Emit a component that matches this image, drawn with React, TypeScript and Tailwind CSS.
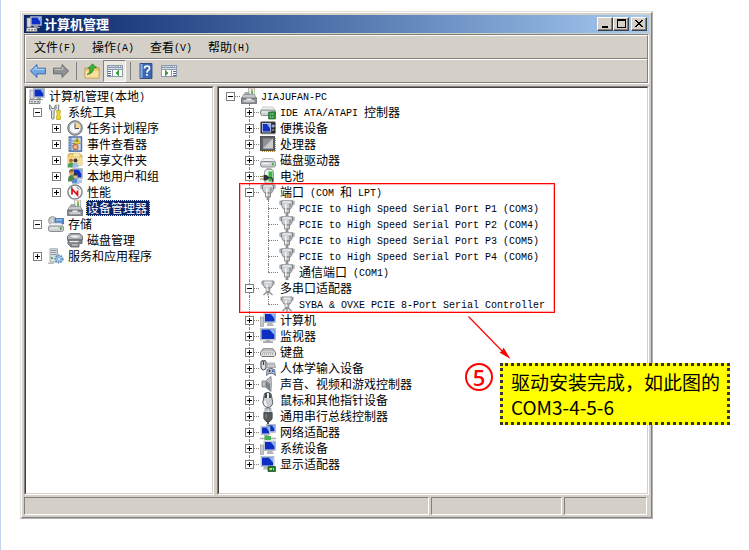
import React from 'react';

type IconName =
  | 'computer' | 'tools' | 'clock' | 'events' | 'shared' | 'users' | 'perf' | 'device'
  | 'storage' | 'disk' | 'services' | 'ide' | 'portable' | 'cpu' | 'drive' | 'battery'
  | 'port' | 'multiport' | 'pc' | 'monitor' | 'keyboard' | 'hid' | 'sound' | 'mouse'
  | 'usb' | 'network' | 'display';

type TreeItem = {
  label: string;
  icon: IconName;
  open?: boolean;
  selected?: boolean;
  children?: TreeItem[];
};

const consoleTree: TreeItem = {
  label: '计算机管理(本地)',
  icon: 'computer',
  open: true,
  children: [
    {
      label: '系统工具',
      icon: 'tools',
      open: true,
      children: [
        { label: '任务计划程序', icon: 'clock', open: false },
        { label: '事件查看器', icon: 'events', open: false },
        { label: '共享文件夹', icon: 'shared', open: false },
        { label: '本地用户和组', icon: 'users', open: false },
        { label: '性能', icon: 'perf', open: false },
        { label: '设备管理器', icon: 'device', selected: true },
      ],
    },
    { label: '存储', icon: 'storage', open: true, children: [{ label: '磁盘管理', icon: 'disk' }] },
    { label: '服务和应用程序', icon: 'services', open: false },
  ],
};

const deviceTree: TreeItem = {
  label: 'JIAJUFAN-PC',
  icon: 'device',
  open: true,
  children: [
    { label: 'IDE ATA/ATAPI 控制器', icon: 'ide', open: false },
    { label: '便携设备', icon: 'portable', open: false },
    { label: '处理器', icon: 'cpu', open: false },
    { label: '磁盘驱动器', icon: 'drive', open: false },
    { label: '电池', icon: 'battery', open: false },
    {
      label: '端口 (COM 和 LPT)',
      icon: 'port',
      open: true,
      children: [
        { label: 'PCIE to High Speed Serial Port P1 (COM3)', icon: 'port' },
        { label: 'PCIE to High Speed Serial Port P2 (COM4)', icon: 'port' },
        { label: 'PCIE to High Speed Serial Port P3 (COM5)', icon: 'port' },
        { label: 'PCIE to High Speed Serial Port P4 (COM6)', icon: 'port' },
        { label: '通信端口 (COM1)', icon: 'port' },
      ],
    },
    {
      label: '多串口适配器',
      icon: 'multiport',
      open: true,
      children: [{ label: 'SYBA & OVXE PCIE 8-Port Serial Controller', icon: 'multiport' }],
    },
    { label: '计算机', icon: 'pc', open: false },
    { label: '监视器', icon: 'monitor', open: false },
    { label: '键盘', icon: 'keyboard', open: false },
    { label: '人体学输入设备', icon: 'hid', open: false },
    { label: '声音、视频和游戏控制器', icon: 'sound', open: false },
    { label: '鼠标和其他指针设备', icon: 'mouse', open: false },
    { label: '通用串行总线控制器', icon: 'usb', open: false },
    { label: '网络适配器', icon: 'network', open: false },
    { label: '系统设备', icon: 'pc', open: false },
    { label: '显示适配器', icon: 'display', open: false },
  ],
};

const menus = ['文件(F)', '操作(A)', '查看(V)', '帮助(H)'];

// Screen with a blue picture, drawn in a box of w x h
function Screen({ x, y, w, h }: { x: number; y: number; w: number; h: number }) {
  return (
    <g>
      <rect x={x} y={y} width={w} height={h} fill="#d3d9df" stroke="#9aa2aa" strokeWidth=".6" />
      <rect x={x + 1} y={y + 1} width={w - 2} height={h - 2} fill="#0b2fc4" />
      <path d={`M${x + w * 0.6} ${y + 1}h${w * 0.4 - 1}v${h / 2}z`} fill="#8db8f4" />
    </g>
  );
}

function DriveBody({ y }: { y: number }) {
  return (
    <g>
      <path d={`M3 ${y}h10l2.5 3.5H.5z`} fill="#f1f2f3" stroke="#b1b5b9" strokeWidth=".7" />
      <rect x=".5" y={y + 3} width="15" height="5.5" rx="2" fill="#cdd0d3" stroke="#7d8185" strokeWidth=".9" />
      <path d={`M2 ${y + 5}h8`} stroke="#f4f5f6" />
      <rect x="12" y={y + 4.3} width="1.6" height="2.6" fill="#3fa84b" />
    </g>
  );
}

const art: Record<IconName, React.ReactNode> = {
  computer: (
    <g>
      <rect x="1" y="2" width="4" height="9" fill="#d8dbe0" stroke="#8a8f96" strokeWidth=".7" />
      <Screen x={4.5} y={0.5} w={11} h={9} />
      <path d="M8 9.5h4v1.500h2v1H7z" fill="#9aa1a9" />
      <path d="M1 11.500h10V15.500H0z" fill="#e5e5e2" stroke="#6e7175" strokeWidth=".8" />
      <path d="M2 13.800h2m1 0h2m1 0h2" stroke="#595d61" />
    </g>
  ),
  tools: (
    <g>
      <path d="M1.500.8v4.500l2 1.600v7.500q1.300 1.600 2.600 0V6.900l2-1.600V.8L6.500 2.500v2H3.300v-2z" fill="#dfe2e4" stroke="#6b7074" strokeWidth=".9" />
      <path d="M10.500.5V7" stroke="#8b8f93" strokeWidth="1.500" />
      <path d="M8.700 6.500h3.600v2.300l-.8 1.200.9 1.500v4H8.600v-4l.9-1.500-.8-1.200z" fill="#f0d91a" stroke="#a8920c" strokeWidth=".6" />
    </g>
  ),
  clock: (
    <g>
      <circle cx="8" cy="8" r="7.300" fill="#a5aaaf" stroke="#63686d" strokeWidth=".9" />
      <circle cx="8" cy="8" r="5.700" fill="#f4f6fa" stroke="#8d9297" strokeWidth=".5" />
      <path d="M8 8V2.300A5.700 5.700 0 0 1 13.700 8z" fill="#f5d797" />
      <path d="M8 3.500V8.500h4" fill="none" stroke="#454a50" strokeWidth="1" />
    </g>
  ),
  events: (
    <g>
      <rect x="2" y=".8" width="12.800" height="14.500" fill="#5f88c8" stroke="#38578c" strokeWidth=".8" />
      <rect x="4.500" y="1.800" width="9.200" height="12.400" fill="#c6dbf3" />
      <path d="M5 5h4M5 7.500h3M5 10h2" stroke="#5079b3" strokeWidth=".8" />
      <path d="M.8 3h2.700M.8 5.500h2.700M.8 8h2.700M.8 10.500h2.700M.8 13h2.700" stroke="#c3c8ce" strokeWidth="1.100" />
      <path d="M10 1.500l3.300 6H6.700z" fill="#ffe13a" stroke="#b58800" strokeWidth=".6" />
      <path d="M10 3.500v2.600" stroke="#222" />
      <rect x="6" y="8.500" width="5" height="5" rx="1" fill="#e58944" stroke="#a34c19" strokeWidth=".6" />
      <path d="M7.300 9.800l2.400 2.400m0-2.400l-2.400 2.400" stroke="#fff" strokeWidth=".8" />
    </g>
  ),
  shared: (
    <g>
      <path d="M1 3l1-1.500h4L7 3h8v10H1z" fill="#efcf78" stroke="#bd9238" strokeWidth=".7" />
      <path d="M6 1h7v4H6z" fill="#f9e9b4" stroke="#c9a65b" strokeWidth=".5" />
      <path d="M1 5.500h14V13H1z" fill="#f7df9a" />
      <circle cx="4" cy="8.500" r="2" fill="#b66f35" />
      <circle cx="8.500" cy="8.500" r="2" fill="#3d3a36" />
      <path d="M.5 15q0-4.500 3.500-4.500t3.500 4.500v.5h-7z" fill="#4aa05a" />
      <path d="M5.500 15.500V13q1-2.500 3-2.500t3 3v2z" fill="#9bc0e4" />
    </g>
  ),
  users: (
    <g>
      <Screen x={6} y={0.5} w={9.5} h={10} />
      <circle cx="4.500" cy="4.500" r="2.500" fill="#d9a058" />
      <path d="M2 4q0-3 3-3 2.500 0 2.300 2.500z" fill="#8a6530" />
      <path d="M1 12q0-5 3.500-5T8 12v1.500H1z" fill="#4a8752" />
      <circle cx="8.500" cy="8" r="2.300" fill="#e2bb8d" />
      <path d="M6.200 7.500q0-2.600 2.600-2.500 2.200.2 2 2.500z" fill="#393128" />
      <path d="M5 15.500q0-5 3.500-5t4 5z" fill="#5b8acb" />
      <path d="M10 11.500h5V15h-5z" fill="#a9c8e8" />
    </g>
  ),
  perf: (
    <g>
      <circle cx="8" cy="8" r="7.100" fill="#fafafa" stroke="#85898d" strokeWidth="1.500" />
      <path d="M5 10.500V5l5.500 6V6.500" fill="none" stroke="#e0131a" strokeWidth="1.800" />
      <path d="M3.500 5l2-1.700M9.500 3.200l2.800 2.200" stroke="#5e6266" strokeWidth=".9" />
    </g>
  ),
  device: (
    <g>
      <path d="M7.500 0H13.500v8h-6z" fill="#eef0ec" stroke="#a2a6a1" strokeWidth=".7" />
      <path d="M11 1v2" stroke="#d9a51d" strokeWidth="1.600" />
      <path d="M11 3v3" stroke="#49a84a" strokeWidth="1.600" />
      <path d="M4 4.500h4l1 3.500H3z" fill="#a9adaf" stroke="#85898c" strokeWidth=".6" />
      <path d="M2.500 6.500h11l2 4H.5z" fill="#c3c7c9" stroke="#85898c" strokeWidth=".7" />
      <path d="M.3 10h15.400v5.500H.3z" fill="#858a8c" stroke="#5c6063" strokeWidth=".7" />
      <path d="M2.500 12h11v2.200h-11z" fill="#c9cdcf" />
      <path d="M5.500 10.500h5v1.500h-5z" fill="#eef0f1" />
    </g>
  ),
  storage: (
    <g>
      <circle cx="4.500" cy="4.500" r="4" fill="#c5cacf" stroke="#7c8186" strokeWidth=".7" />
      <circle cx="4.500" cy="4.500" r="1.200" fill="#fff" stroke="#888" strokeWidth=".4" />
      <path d="M7 2.500h8.500V8H7z" fill="#4d88d2" stroke="#356197" strokeWidth=".7" />
      <path d="M8 3.500h6v1H8z" fill="#c5def7" />
      <DriveBody y={7} />
    </g>
  ),
  disk: (
    <g>
      <path d="M3 1.500h10l2.500 3V8H.5V4.500z" fill="#afb3b6" stroke="#64686b" strokeWidth=".9" />
      <ellipse cx="8" cy="4.500" rx="5" ry="1.800" fill="#edeff0" stroke="#808487" strokeWidth=".6" />
      <path d="M1 8h14v3.500h-3V15H4l-3-3z" fill="#85898c" stroke="#565a5d" strokeWidth=".8" />
      <path d="M2.500 9.500h9" stroke="#e9ebec" strokeWidth="1.200" />
      <path d="M5 13h6" stroke="#d3d6d8" />
    </g>
  ),
  services: (
    <g>
      <path d="M2 .8h7.500V14H2z" fill="#dcdfe2" stroke="#92979b" strokeWidth=".8" />
      <path d="M3 2.500h5.500M3 4.500h5.500M3 6.500h5.500" stroke="#7e8387" strokeWidth=".8" />
      <rect x="3" y="9" width="2" height="2" fill="#49b64e" />
      <circle cx="11" cy="11" r="3.600" fill="#b3cee9" stroke="#5a8fc4" strokeWidth="2" strokeDasharray="1.600 1" />
      <circle cx="11" cy="11" r="1.500" fill="#fff" stroke="#5a8fc4" strokeWidth=".7" />
      <path d="M0 14.500h6V16H0z" fill="#b5babd" />
    </g>
  ),
  ide: (
    <g>
      <DriveBody y={3} />
      <path d="M8.500 8h7v7h-7z" fill="#2e8f3f" stroke="#1b6b2e" strokeWidth=".7" />
      <path d="M10 10h4M10 13h4" stroke="#b3eab7" strokeWidth="1" strokeDasharray="1 .8" />
    </g>
  ),
  portable: (
    <g>
      <rect x=".5" y="1.800" width="15" height="12" rx="1.200" fill="#23272c" stroke="#84898d" strokeWidth=".9" />
      <rect x="2.300" y="3.500" width="8.400" height="8.500" fill="#1031c8" stroke="#dde1e5" strokeWidth=".8" />
      <path d="M7 4h3.300v5z" fill="#8db6f5" />
      <circle cx="13.200" cy="6" r="1.300" fill="#5b8fe6" stroke="#e4e7ea" strokeWidth=".5" />
      <path d="M12.200 10h2" stroke="#e4e7ea" />
    </g>
  ),
  cpu: (
    <g>
      <path d="M2 15.400h13M15.300 2v13" stroke="#b98b32" strokeWidth="1.200" strokeDasharray="1 1" />
      <rect x=".4" y=".5" width="14" height="14" fill="#5c6061" stroke="#3b3f40" strokeWidth=".8" />
      <rect x="3" y="2.500" width="10" height="10" fill="#8f9394" />
      <path d="M13 2.500v10H3z" fill="#c9cccd" />
    </g>
  ),
  drive: <DriveBody y={6.500} />,
  battery: (
    <g>
      <rect x="6.500" y=".3" width="5" height="2" fill="#9ea3a6" />
      <rect x="4.500" y="1.300" width="9" height="14" rx="3" fill="#e9f2ea" stroke="#858b8d" strokeWidth=".9" />
      <path d="M8.500 3.500h4v10h-4z" fill="#35b846" />
      <path d="M3.500 7H6.500l2.500 2v1.600l-2.500 2H3.500z" fill="#2b3031" />
      <path d="M0 8.500h3.500M0 11h3.500" stroke="#8b7b35" strokeWidth="1.200" />
      <path d="M9 9.800h2.500q1.500 1 1.500 4.200" fill="none" stroke="#2b3031" strokeWidth="1.100" />
    </g>
  ),
  port: (
    <g>
      <path d="M.8 1h2.400v3.500H.8zM12.800 1h2.400v3.500h-2.400z" fill="#bfc3c5" stroke="#83878a" strokeWidth=".6" />
      <path d="M2.500.8h11v4.700L11.500 9h-7l-2-3.500z" fill="#c9cdcf" stroke="#7b7f82" strokeWidth=".9" />
      <path d="M4 2h8" stroke="#f3f4f5" strokeWidth="1.200" />
      <path d="M10 3.500h2.500v2L10.800 8.500H10z" fill="#989da0" />
      <path d="M5.500 9h5v4h-5z" fill="#c3c7c9" stroke="#75797c" strokeWidth=".8" />
      <path d="M6.800 4v8.500" stroke="#fff" strokeWidth="1.200" />
      <path d="M7 13h2v3H7z" fill="#a2a6a9" stroke="#75797c" strokeWidth=".6" />
    </g>
  ),
  multiport: (
    <g>
      <path d="M1.800 1.200h2v3h-2zM12.200 1.200h2v3h-2z" fill="#bfc3c5" stroke="#83878a" strokeWidth=".6" />
      <path d="M3 1h10v3.500L11 8H5L3 4.500z" fill="#c9cdcf" stroke="#7b7f82" strokeWidth=".9" />
      <path d="M4.500 2.200h7" stroke="#f3f4f5" strokeWidth="1.200" />
      <path d="M6.200 8h3.600v3.500H6.200z" fill="#c8cbcd" stroke="#75797c" strokeWidth=".8" />
      <path d="M7 4v7" stroke="#fff" />
      <path d="M7.500 11.500L3.500 15M8.500 11.500l4 3.500M8 11v4.500" fill="none" stroke="#8d9194" strokeWidth="1.400" />
    </g>
  ),
  pc: (
    <g>
      <rect x=".6" y="5" width="3" height="9.500" fill="#c9cccf" stroke="#8b8f92" strokeWidth=".6" />
      <Screen x={4} y={1} w={11.500} h={9.500} />
      <path d="M8 10.500h4l2 3.500H6.500z" fill="#b2b6ba" />
    </g>
  ),
  monitor: (
    <g>
      <Screen x={0.5} y={0.5} w={15} h={11.500} />
      <path d="M6 12h4l.5 1.300H13V15H3v-1.700h2.500z" fill="#a5aaae" />
    </g>
  ),
  keyboard: (
    <g>
      <path d="M3 4.800h10l2.500 3.700V11L14 12.500H2L.5 11V8.500z" fill="#e4e4e3" stroke="#616466" strokeWidth=".9" />
      <path d="M3.500 6.300h9M2.500 8.200h11M2 10h12" stroke="#75787a" strokeWidth=".9" strokeDasharray="1 1" />
    </g>
  ),
  hid: (
    <g>
      <path d="M1 1.500q2.500-3 5 0v7q-2.500 3-5 0z" fill="#e1e4e6" stroke="#34383b" strokeWidth="1" />
      <path d="M3.500 1v4" stroke="#3c4043" strokeWidth="1.300" />
      <path d="M6.500 3h8l1 4.500h-9z" fill="#dcdedf" stroke="#85898c" strokeWidth=".7" />
      <path d="M7 4.500h7M7 6h8" stroke="#777" strokeWidth=".7" strokeDasharray="1 .8" />
      <path d="M7 9.500q4-2.500 7.500 0l1 6-2.500-2H9l-2.500 2z" fill="#b4bfcf" stroke="#4f5a6b" strokeWidth=".8" />
      <path d="M8.500 11h2m-1-1v2" stroke="#222" strokeWidth=".8" />
      <circle cx="12.800" cy="11" r="1" fill="#2c5bd0" />
    </g>
  ),
  sound: (
    <g>
      <path d="M2 5h3.500L11 .5v15L5.500 11H2z" fill="#b9bdc0" stroke="#75797d" strokeWidth=".8" />
      <path d="M5.500 5v6l5 4.200V8z" fill="#7b8084" />
      <path d="M10.500.8q2.200 7 0 14.500" fill="#dfe2e4" stroke="#90959a" strokeWidth=".8" />
    </g>
  ),
  mouse: (
    <g>
      <path d="M4.500 1.500Q8-1 11 1.500l1.800 9q-.8 5-4.800 5t-5.200-5z" fill="#c9cdd0" stroke="#505457" strokeWidth=".9" />
      <path d="M5 1.500Q8-.5 10.500 1.500l.7 4.500H4.300z" fill="#45494c" />
      <path d="M7 1h2v5.500H7z" fill="#eceeef" />
      <path d="M5 8.500q-.5 4 2 5.500" fill="none" stroke="#fff" strokeWidth="1.300" />
    </g>
  ),
  usb: (
    <g>
      <path d="M5 .5h6V5H5z" fill="#e1e4e6" stroke="#888c8f" strokeWidth=".8" />
      <path d="M6.500 2h1m1.500 0h1" stroke="#555" />
      <path d="M3.800 4.500h8.400v6L10 13.500H6l-2.200-3z" fill="#54585b" stroke="#35393b" strokeWidth=".7" />
      <path d="M6 6v4.500" stroke="#8f9396" />
      <path d="M8 13v3" stroke="#3f4346" strokeWidth="1.800" />
    </g>
  ),
  network: (
    <g>
      <Screen x={6.500} y={0.300} w={9} h={8} />
      <Screen x={1} y={2.500} w={9} h={8} />
      <path d="M4 10.500h4v1.500H4z" fill="#a5aaae" />
      <path d="M0 14.500h16M8 11V14" stroke="#adb3ac" strokeWidth="1.500" />
      <path d="M4.500 12h6.500v4H4.500z" fill="#47b055" />
    </g>
  ),
  display: (
    <g>
      <Screen x={1} y={0.500} w={13} h={10} />
      <path d="M4 10.500h4l.5 3H3z" fill="#b2b6ba" />
      <path d="M8 10.500h7.500V15.500H8z" fill="#1f7832" stroke="#124f20" strokeWidth=".7" />
      <path d="M9.500 12h2.500v2H9.500z" fill="#e7d54b" />
      <path d="M13.500 12v2" stroke="#b3eab7" />
    </g>
  ),
};

function Icon({ name }: { name: IconName }) {
  return (
    <svg viewBox="0 0 16 16" className="h-4 w-4 shrink-0" aria-hidden="true">
      {art[name]}
    </svg>
  );
}

// Half-width characters take 6px, full-width ones take 12px
function Mixed({ text }: { text: string }) {
  return (
    <span className="whitespace-pre">
      {text.split(/([\x20-\x7e]+)/).filter(Boolean).map((run, i) =>
        /^[\x20-\x7e]/.test(run) ? (
          <span key={i} className="align-[1px] font-['Liberation_Mono',monospace] text-[10px] leading-3">{run}</span>
        ) : (
          <span key={i}>{run}</span>
        ),
      )}
    </span>
  );
}

function Toggle({ open }: { open: boolean }) {
  return (
    <button
      aria-label={open ? '折叠' : '展开'}
      className="relative flex h-[9px] w-[9px] items-center justify-center border border-[#808080] bg-white"
    >
      <span className="h-px w-[5px] bg-black" />
      {!open && <span className="absolute h-[5px] w-px bg-black" />}
    </button>
  );
}

type RowsProps = {
  item: TreeItem;
  depth: number;
  lines: boolean;
  rails: boolean[];
  last: boolean;
};

function Rows({ item, depth, lines, rails, last }: RowsProps) {
  const isRoot = depth === 0;
  const hasCell = lines || !isRoot;
  const children = item.children ?? [];
  return (
    <li>
      <div className="flex h-4 items-center">
        {rails.map((rail, i) => (
          <span key={i} className="flex h-4 w-[19px] shrink-0 justify-center">
            {lines && rail && <span className="h-4 border-l border-dotted border-[#808080]" />}
          </span>
        ))}
        {hasCell && (
          <span className="relative flex h-4 w-[19px] shrink-0 items-center justify-center">
            {lines && !isRoot && (
              <span className={`absolute top-0 left-[9px] border-l border-dotted border-[#808080] ${last ? 'h-2' : 'h-4'}`} />
            )}
            {lines && (
              <span className="absolute top-2 right-0 left-[9px] border-t border-dotted border-[#808080]" />
            )}
            {item.open !== undefined && <Toggle open={item.open} />}
          </span>
        )}
        <span className="mr-[3px] ml-px flex">
          <Icon name={item.icon} />
        </span>
        <span
          className={`h-4 pr-[3px] pl-px leading-4 ${
            item.selected ? 'bg-[#0a246a] text-white outline-1 -outline-offset-1 outline-dotted outline-[#f5db95]' : ''
          }`}
        >
          <Mixed text={item.label} />
        </span>
      </div>
      {item.open && children.length > 0 && (
        <ul>
          {children.map((child, i) => (
            <Rows
              key={child.label}
              item={child}
              depth={depth + 1}
              lines={lines}
              rails={hasCell ? [...rails, !isRoot && !last] : []}
              last={i === children.length - 1}
            />
          ))}
        </ul>
      )}
    </li>
  );
}

function Pane({ className, children }: { className: string; children: React.ReactNode }) {
  return (
    <div className={`border border-t-[#808080] border-r-white border-b-white border-l-[#808080] ${className}`}>
      <div className="h-full border border-t-[#404040] border-r-[#d4d0c8] border-b-[#d4d0c8] border-l-[#404040] bg-white px-0.5 pb-[21px]">
        {children}
      </div>
    </div>
  );
}

function CaptionButton({ label, children }: { label: string; children: React.ReactNode }) {
  return (
    <button
      aria-label={label}
      className="flex h-[14px] w-4 items-center justify-center border border-t-white border-r-[#404040] border-b-[#404040] border-l-white bg-[#d4d0c8] shadow-[inset_-1px_-1px_0_#808080]"
    >
      <svg viewBox="0 0 12 10" className="h-[10px] w-3" shapeRendering="crispEdges">
        {children}
      </svg>
    </button>
  );
}

function ToolButton({ label, pressed, children }: { label: string; pressed?: boolean; children: React.ReactNode }) {
  return (
    <button
      aria-label={label}
      className={`flex h-[22px] w-[23px] items-center justify-center border ${
        pressed ? 'border-t-[#808080] border-r-white border-b-white border-l-[#808080] bg-[#ebe9e4]' : 'border-transparent'
      }`}
    >
      <svg viewBox="0 0 16 16" className="h-4 w-4">{children}</svg>
    </button>
  );
}

function Separator() {
  return (
    <span className="flex w-2 justify-center">
      <span className="h-[18px] w-px bg-[#808080]" />
    </span>
  );
}

function PaneGlyph({ flip }: { flip?: boolean }) {
  return (
    <g shapeRendering="crispEdges">
      <rect x="0" y="2" width="16" height="12" fill="#8d99ad" />
      <path d="M1 3h10v1H1z" fill="#c3cee0" />
      <path d="M12 3h1v1h-1zM14 3h1v1h-1z" fill="#fff" />
      <path d="M1 5h14v1H1z" fill="#d4dbe7" />
      <path d="M1 7h14v6H1z" fill="#fff" />
      {flip ? (
        <>
          <path d="M10 7h1v6h-1z" fill="#8d99ad" />
          <path d="M12 8h3v1h-3zM12 10h3v1h-3zM12 12h3v1h-3z" fill="#5d6c88" />
          <path d="M4 7l4 3-4 3z" fill="#35a63d" />
        </>
      ) : (
        <>
          <path d="M5 7h1v6H5z" fill="#8d99ad" />
          <path d="M1 8h3v1H1zM1 10h3v1H1zM1 12h3v1H1z" fill="#5d6c88" />
          <path d="M12 7l-4 3 4 3z" fill="#35a63d" />
        </>
      )}
    </g>
  );
}

function TitleBar() {
  return (
    <header className="flex h-[18px] items-center bg-linear-to-r from-[#0a246a] to-[#a6caf0] pr-0.5 pl-0.5">
      <Icon name="computer" />
      <h1 className="ml-0.5 flex-1 text-[13px] leading-[18px] font-bold text-white">计算机管理</h1>
      <div className="flex">
        <CaptionButton label="最小化">
          <path d="M3 7h6v2H3z" />
        </CaptionButton>
        <CaptionButton label="最大化">
          <path d="M2 0h9v9H2zM3 2v6h7V2z" fillRule="evenodd" />
        </CaptionButton>
      </div>
      <div className="ml-0.5">
        <CaptionButton label="关闭">
          <path d="M2 1h2v1h1v1h2V2h1V1h2v1H9v1H8v1H7v1h1v1h1v1h1v1H8V7H7V6H5v1H4v1H2V7h1V6h1V5h1V4H4V3H3V2H2z" />
        </CaptionButton>
      </div>
    </header>
  );
}

function Bars() {
  return (
    <div className="mt-px border border-t-[#808080] border-r-white border-b-white border-l-[#808080]">
      <div className="border border-t-white border-r-[#808080] border-b-[#808080] border-l-white">
        <nav className="flex h-[23px] items-center border-b border-[#808080]">
          {menus.map((menu) => (
            <button key={menu} className="px-2 leading-4">
              <Mixed text={menu} />
            </button>
          ))}
        </nav>
        <div className="flex items-center border-t border-white">
          <ToolButton label="后退">
            <path d="M.4 8L7 1.500v3.700h8.600v5.600H7v3.700z" fill="#72a7e6" stroke="#2f63ad" strokeWidth=".9" />
            <path d="M2.500 7.500L6.200 4v2.300h8.300" fill="none" stroke="#bddbfa" />
          </ToolButton>
          <ToolButton label="前进">
            <path d="M15.600 8L9 1.500v3.700H.4v5.600H9v3.700z" fill="#8f9294" stroke="#5e6163" strokeWidth=".9" />
            <path d="M1.500 6.300h8.300V4" fill="none" stroke="#c8cacb" />
          </ToolButton>
          <Separator />
          <ToolButton label="上一级">
            <path d="M1 5h5l1.500-1.500H12L13 5h2v10H1z" fill="#eecb73" stroke="#b88d31" strokeWidth=".8" />
            <path d="M1.500 8h13v6.500h-13z" fill="#f8e0a0" />
            <path d="M3 11.500q3-1 3-6H4L8.500.8 12.500 5H9.500q0 6-6.500 6.500z" fill="#3fae3c" stroke="#23791f" strokeWidth=".6" />
          </ToolButton>
          <ToolButton label="显示/隐藏控制台树" pressed>
            <PaneGlyph />
          </ToolButton>
          <Separator />
          <ToolButton label="帮助">
            <path d="M2 .5h12v15H2z" fill="#3c69b1" stroke="#1e3f78" strokeWidth=".8" />
            <path d="M2.500 1h2v14h-2z" fill="#8eb0de" />
            <path d="M6.500 5.500q0-2.500 2.500-2.500t2.500 2q0 1.500-1.300 2.300T9 9.800" fill="none" stroke="#fff" strokeWidth="1.700" />
            <path d="M8.100 11h1.800v1.800H8.100z" fill="#fff" />
          </ToolButton>
          <ToolButton label="显示/隐藏操作窗格">
            <PaneGlyph flip />
          </ToolButton>
        </div>
      </div>
    </div>
  );
}

const statusCell = 'border border-t-[#808080] border-r-white border-b-white border-l-[#808080]';

export default function App() {
  return (
    <div className="relative min-h-screen border-r border-l border-[#c6d5ee] bg-white pt-[11px] pr-24 pl-[19px] font-['Noto_Sans_CJK_SC',sans-serif] text-xs leading-4 text-black">
      <div className="border border-t-[#e4e2dd] border-r-[#b4b4b4] border-b-[#b4b4b4] border-l-[#e4e2dd]">
        <div className="border border-t-white border-r-[#808080] border-b-[#808080] border-l-white bg-[#d4d0c8] p-0.5">
          <TitleBar />
          <Bars />
          <main className="mt-0.5 flex gap-[3px]">
            <Pane className="w-[190px] shrink-0">
              <ul>
                <Rows item={consoleTree} depth={0} lines={false} rails={[]} last />
              </ul>
            </Pane>
            <Pane className="min-w-0 flex-1">
              <ul>
                <Rows item={deviceTree} depth={0} lines rails={[]} last />
              </ul>
            </Pane>
          </main>
          <footer className="mt-0.5 mr-0.5 flex h-[18px] gap-0.5">
            <div className={`flex-1 ${statusCell}`} />
            <div className={`w-[131px] ${statusCell}`} />
            <div className={`w-[83px] ${statusCell}`} />
          </footer>
        </div>
      </div>

      {/* callouts over the window */}
      <div className="pointer-events-none absolute top-[183px] left-[238px] h-[130px] w-[316px] border border-solid border-[#ff0000] shadow-[inset_0_0_0_1px_#ff00004d]" />
      <svg className="absolute top-[314px] left-[466px] h-12 w-12" viewBox="0 0 48 48" aria-hidden="true">
        <path d="M1.500 2.500L36 38" stroke="#ff0000" strokeWidth="1.200" />
        <path d="M43.500 45l-11-6.500 2.500-1.500 1.500-3.500z" fill="#ff0000" />
      </svg>
      <span className="absolute top-[363px] left-[464px] flex h-7 w-7 items-center justify-center rounded-full border-2 border-[#ff0000] font-['Open_Sans',sans-serif] text-[22px] leading-6 font-semibold text-[#ff0000]">
        5
      </span>
      <p className="absolute top-[363px] left-[499px] w-[230px] border-[3px] border-dotted border-[#333] bg-[#ffff00] py-[3px] pl-2 text-[19px] leading-[25px] whitespace-nowrap">
        驱动安装完成，如此图的
        <br />
        COM3-4-5-6
      </p>
    </div>
  );
}
